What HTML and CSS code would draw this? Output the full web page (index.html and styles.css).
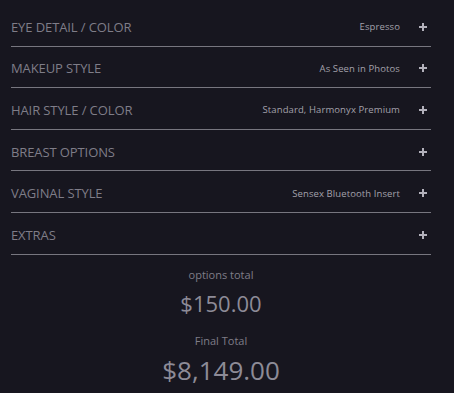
FILE: index.html
```html
<!DOCTYPE html>
<html lang="en">
<head>
    <meta charset="UTF-8">
    <meta name="viewport" content="width=device-width, initial-scale=1.0">
    <title>Options Summary</title>
    <link rel="stylesheet" href="styles.css">
</head>
<body>
    <div id="options-list">
        <div class="option-row">
            <span class="option-name">EYE DETAIL / COLOR</span>
            <span class="option-value">Espresso</span>
            <span class="option-toggle"></span>
        </div>
        <div class="option-row">
            <span class="option-name">MAKEUP STYLE</span>
            <span class="option-value">As Seen in Photos</span>
            <span class="option-toggle"></span>
        </div>
        <div class="option-row">
            <span class="option-name">HAIR STYLE / COLOR</span>
            <span class="option-value">Standard, Harmonyx Premium</span>
            <span class="option-toggle"></span>
        </div>
        <div class="option-row">
            <span class="option-name">BREAST OPTIONS</span>
            <span class="option-value"></span>
            <span class="option-toggle"></span>
        </div>
        <div class="option-row">
            <span class="option-name">VAGINAL STYLE</span>
            <span class="option-value">Sensex Bluetooth Insert</span>
            <span class="option-toggle"></span>
        </div>
        <div class="option-row">
            <span class="option-name">EXTRAS</span>
            <span class="option-value"></span>
            <span class="option-toggle"></span>
        </div>
    </div>

    <div id="totals">
        <p class="total-label">options total</p>
        <p class="total-price">$150.00</p>
        <p class="total-label">Final Total</p>
        <p class="total-price big">$8,149.00</p>
    </div>
</body>
</html>
```
FILE: styles.css
```css
body {
    margin: 0;
    padding: 5px 23px 0 11px;
    background-color: #17161f;
    font-family: "Open Sans", sans-serif;
    color: #7f7d88;
}
.option-row {
    display: flex;
    align-items: center;
    height: 41.6px;
    padding-top: 3px;
    box-sizing: border-box;
    border-bottom: 1px solid #77767f;
}
.option-name {
    flex: 1;
    font-size: 13px;
    letter-spacing: -0.1px;
}
.option-value {
    font-size: 9.5px;
    letter-spacing: 0.1px;
    color: #a3a1ab;
    margin-right: 19px;
}
.option-toggle {
    position: relative;
    width: 8px;
    height: 8px;
    margin-right: 4px;
}
.option-toggle::before,
.option-toggle::after {
    content: "";
    position: absolute;
    background-color: #b3b1bb;
}
.option-toggle::before {
    left: 0;
    top: 3px;
    width: 8px;
    height: 2px;
}
.option-toggle::after {
    left: 3px;
    top: 0;
    width: 2px;
    height: 8px;
}
#totals {
    text-align: center;
    padding-top: 12px;
}
#totals p {
    margin: 0;
}
.total-label {
    font-size: 11px;
    line-height: 16px;
}
.total-price {
    font-size: 22px;
    line-height: 40px;
    color: #8d8b97;
    margin-bottom: 10px !important;
}
.total-price.big {
    font-size: 26px;
    line-height: 42px;
}
```
